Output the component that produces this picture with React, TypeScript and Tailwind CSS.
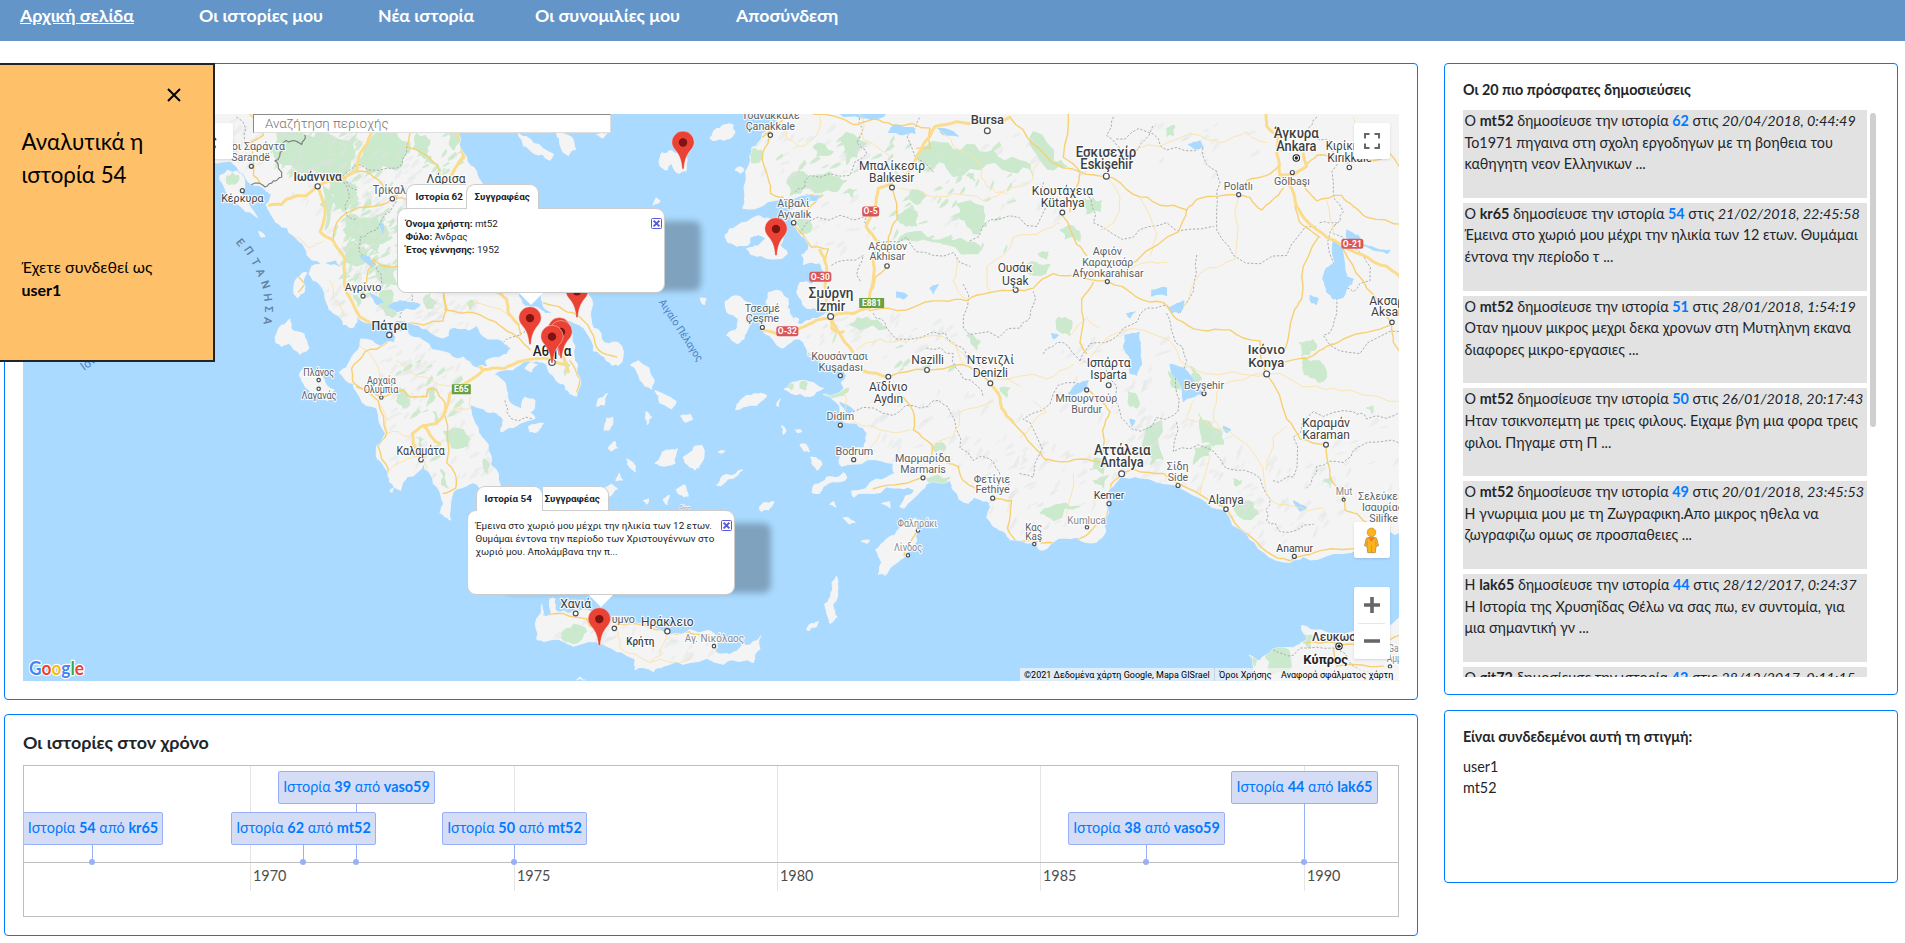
import React from "react";

type Pt = [number, number];

/* ---------- map data: survey sheets, each with its own origin ---------- */
const SX = 1 / 3;
const SY = 1 / 2.751;
const WEST = { x: 210, y: 110 };
const EAST = { x: 700, y: 110 };
const sheet = (o: { x: number; y: number }) => `translate(${o.x} ${o.y}) scale(${SX} ${SY})`;

const landWest = [
  "-20,0 745,0 742,60 770,130 800,170 818,205 840,300 880,420 930,500 925,508 932,520 945,540 985,545 1005,560 1045,570 1080,590 1095,650 1103,700 1112,750 1100,787 1080,780 1060,752 1035,738 1010,700 980,690 930,700 880,716 850,730 885,750 893,790 915,815 960,830 975,848 930,862 890,876 872,884 880,852 850,830 810,820 780,808 790,850 815,900 842,950 845,980 870,1030 878,1062 830,1050 790,1025 742,1042 722,1080 722,1128 705,1118 690,1108 700,1080 690,1050 660,1000 640,970 592,1008 572,1046 538,1022 530,990 503,960 500,925 527,890 500,820 450,790 430,752 388,722 420,690 450,650 453,630 510,650 555,640 550,610 590,605 640,635 700,665 760,680 800,710 835,705 828,690 870,680 905,655 880,636 820,622 800,592 750,602 722,600 715,620 650,602 600,585 560,578 540,592 480,585 442,566 432,596 400,590 372,560 350,530 330,480 297,450 305,430 350,424 395,432 380,412 340,425 305,412 285,380 250,345 205,312 182,285 168,260 185,232 165,218 125,205 100,175 62,140 -20,130",
  "1000,500 1130,500 1145,545 1150,600 1182,640 1235,650 1225,702 1190,690 1150,662 1130,612 1080,580 1030,560 1000,540",
  "980,1455 980,1400 995,1360 1003,1395 1025,1385 1020,1345 1035,1345 1040,1380 1080,1385 1120,1375 1160,1400 1250,1415 1290,1412 1350,1430 1400,1440 1440,1430 1495,1432 1512,1440 1515,1490 1560,1498 1600,1470 1640,1460 1652,1447 1650,1482 1630,1520 1600,1515 1540,1525 1440,1520 1360,1530 1330,1545 1275,1540 1275,1510 1220,1490 1180,1470 1090,1475 1060,1462 1000,1462",
  "1348,148 1355,118 1385,112 1398,120 1430,130 1428,168 1408,174 1385,145 1372,165",
  "925,65 970,92 1030,122 1020,138 970,118 940,98",
  "1040,65 1085,75 1097,108 1075,125 1050,95",
  "1160,68 1190,64 1180,76",
  "30,180 80,168 103,190 95,240 130,278 142,295 108,280 60,235 40,205",
  "146,335 165,348 156,350",
  "252,505 262,462 290,448 283,500 262,516",
  "198,640 215,592 240,575 242,600 282,616 297,655 270,672 235,640 215,650",
  "268,730 290,708 342,740 372,770 352,800 310,780 285,760",
  "1330,262 1338,242 1350,250",
  "1262,702 1285,690 1332,742 1325,768 1290,742",
  "1335,772 1398,802 1385,822 1350,806",
  "1160,815 1165,795 1192,780 1182,812",
  "1182,880 1190,848 1207,845 1198,880",
  "1195,930 1215,912 1222,930 1205,938",
  "1250,960 1268,970 1276,995 1262,985",
  "1308,830 1325,845 1312,865",
  "1412,842 1442,838 1448,850 1425,858",
  "1335,972 1370,935 1402,932 1395,972 1350,978",
  "1420,955 1475,922 1482,955 1455,990 1425,970",
  "1398,1045 1425,1032 1435,1062 1410,1058",
  "1360,1070 1378,1060 1372,1085",
  "1300,1075 1316,1070 1310,1084",
  "1180,1045 1205,1030 1222,1042 1200,1062",
  "1218,1020 1228,1000 1238,1018",
  "945,710 960,696 982,700 965,720",
  "930,830 945,790 975,800 962,830",
  "955,872 1000,862 985,882 960,885",
  "1475,520 1488,518 1484,535",
  "1100,1568 1110,1560 1125,1568",
  "540,1048 550,1040 546,1052",
];

const landEast = [
  "240,0 210,50 175,90 155,105 148,150 135,235 128,270 190,262 240,245 330,235 372,230 352,250 320,262 285,268 268,285 275,310 300,340 322,365 325,385 305,398 310,425 360,420 378,445 352,460 335,480 300,475 290,500 320,545 360,550 388,560 355,572 330,580 300,590 270,562 262,540 265,520 240,498 205,503 198,530 218,560 180,590 195,615 245,655 268,642 300,630 316,650 322,675 360,690 400,700 432,712 440,730 425,748 432,765 370,782 400,798 420,820 425,850 470,862 502,890 492,930 420,945 425,980 500,963 580,972 585,1000 530,1015 455,1048 462,1065 520,1055 600,1040 645,1045 600,1090 612,1095 665,1045 700,1022 750,1018 760,1045 805,1082 820,1065 860,1075 872,1090 860,1120 880,1145 915,1162 930,1182 1000,1190 1020,1210 1060,1188 1130,1175 1190,1188 1217,1160 1210,1130 1225,1080 1230,1040 1260,1010 1320,1012 1420,1030 1500,1067 1575,1100 1640,1165 1690,1215 1770,1244 1810,1228 1900,1220 2000,1195 2060,1160 2110,1165 2110,0",
  "75,345 110,320 170,292 212,300 250,340 240,372 262,395 225,410 170,402 140,382 175,374 198,350 175,342 150,350 150,365 110,375 85,365",
  "75,528 120,513 152,532 150,560 132,572 148,595 132,630 110,642 80,620 112,600 115,575 80,555",
  "30,78 60,50 100,42 105,62 80,80 45,84",
  "105,165 125,158 132,165 120,174",
  "253,768 290,748 340,750 370,765 330,788 300,780",
  "107,824 120,800 165,780 200,786 185,800 150,812",
  "336,1052 345,1030 380,1010 430,998 440,1012 400,1022 370,1035 350,1055",
  "535,1277 545,1245 527,1210 560,1180 600,1150 645,1122 662,1130 652,1160 635,1202 610,1232 580,1252 555,1280",
  "410,1283 414,1310 398,1360 411,1395 390,1412 374,1360 392,1340 396,1300",
  "320,1430 330,1415 355,1408 350,1420 328,1432",
  "300,922 318,920 328,940 312,938",
  "332,955 362,965 366,975 350,990 340,978",
  "245,868 258,882 250,892",
  "285,880 305,884 292,888",
  "50,1032 80,1003 128,990 112,1005 62,1034",
  "178,1095 195,1080 222,1078 205,1100 185,1104",
  "430,1122 445,1122 465,1135 450,1138",
  "484,1187 508,1184 500,1192",
  "390,1085 402,1078 408,1092",
  "545,1083 568,1078 570,1094",
  "55,940 75,938 66,944",
  "-20,930 5,925 8,960 -5,985 -20,960",
  "0,518 14,520 12,535",
  "230,812 242,795 236,815",
  "283,572 296,576 288,590",
  "1648,1500 1680,1515 1720,1482 1800,1470 1820,1458 1805,1418 1860,1430 1960,1435 2070,1420 2110,1385 2110,1600 1665,1600 1660,1530",
];

const greensWest = [
  "200,60 290,70 330,62 440,65 435,130 400,180 330,170 260,175 220,150 190,100",
  "490,70 560,65 600,90 590,120 540,160 470,170 450,140",
  "620,65 660,90 650,120 680,150 660,130 610,105",
  "360,190 420,200 440,230 400,280 370,250",
  "410,290 450,300 500,290 530,360 500,390 450,370 400,330",
  "340,210 360,300 345,330 330,260",
  "400,380 440,370 470,400 440,430 405,420",
  "500,430 550,440 560,480 520,480",
  "510,500 550,505 560,560 530,565",
  "430,510 450,520 445,540",
  "730,20 745,90 730,110 710,40",
  "190,10 240,60 210,70",
  "50,182 85,180 80,200 50,200",
  "640,520 660,505 680,530 650,545",
  "700,885 760,880 780,905 750,930 725,930",
  "570,765 600,800 590,820 560,800",
  "650,770 675,765 670,800 650,815",
  "620,900 640,905 630,930",
  "690,990 705,1000 715,1040 695,1030",
  "820,960 840,975 830,1000",
  "1055,1440 1090,1415 1130,1435 1110,1460 1065,1462",
  "770,530 790,525 780,550",
  "810,670 840,665 820,690",
  "1060,690 1080,700 1065,730",
  "670,830 685,850 675,860",
];
const greensEast = [
  "260,200 310,170 390,170 440,195 400,225 330,215 270,235",
  "420,80 500,90 470,130 440,150",
  "340,100 400,115 350,125",
  "655,130 720,90 800,95 880,110 960,140 1000,180 930,170 840,165 740,160 690,150",
  "770,260 850,265 860,320 820,340 780,300",
  "630,225 650,220 680,235 650,260",
  "590,290 650,280 650,320 620,320",
  "600,350 680,350 760,360 840,375 835,395 740,370 650,360 590,365",
  "430,230 470,220 460,240",
  "290,310 320,300 330,335 300,335",
  "450,590 500,570 540,585 560,600 480,605",
  "370,780 445,765 430,785 385,790",
  "800,620 840,635 830,660",
  "960,440 1010,420 1050,425 1010,455",
  "1015,395 1045,390 1040,410",
  "1000,60 1060,140 1100,155 1060,165 1010,120",
  "150,120 185,110 180,140 155,145",
  "1150,245 1205,250 1200,280 1160,285",
  "1080,330 1120,320 1140,360 1095,355",
  "1075,570 1115,580 1110,620 1080,610",
  "1285,775 1310,785 1310,820 1290,815",
  "1335,880 1385,855 1390,960 1350,975 1325,930",
  "1405,720 1440,740 1445,770 1415,760",
  "1470,705 1505,740 1495,755 1475,740",
  "1495,835 1560,880 1570,920 1540,925 1500,880",
  "1485,930 1530,920 1525,950 1480,975",
  "1180,960 1220,965 1210,1000 1170,990",
  "1180,1020 1225,1005 1210,1040",
  "1020,1110 1080,1085 1140,1090 1060,1130",
  "1605,1075 1660,1080 1675,1110 1630,1125 1600,1095",
  "1600,1015 1625,1020 1610,1035",
  "1798,640 1840,632 1845,660 1805,675",
  "1805,680 1840,690 1880,735 1830,735 1808,710",
  "1870,1020 1895,1010 1890,1040",
  "2000,820 2020,815 2015,835",
  "700,925 725,915 735,935 705,940",
  "680,1015 750,1010 740,1025 690,1030",
  "900,765 930,765 920,790",
  "258,762 280,755 275,770",
  "300,750 322,752 318,768 300,765",
  "1700,1490 1730,1475 1770,1500 1760,1555 1710,1550",
  "1650,1500 1670,1515 1665,1530",
  "1810,1440 1840,1450 1830,1480 1805,1460",
  "1400,50 1425,45 1420,70 1400,72",
  "800,180 820,175 825,195",
];

const watersWest = [
  "535,540 570,525 600,530 590,545 560,555",
  "450,400 480,405 492,430 470,420",
  "480,505 520,530 500,535",
  "510,310 520,315 518,340",
  "575,535 590,530 630,535 615,548",
];
const watersEast = [
  "565,62 585,40 640,48 645,65 610,68",
  "410,0 560,0 550,18 500,22 430,18",
  "715,50 760,60 775,72 730,68",
  "590,500 622,510 610,520 590,515",
  "690,490 715,480 700,505",
  "295,240 345,235 310,262",
  "420,805 460,825 440,835",
  "1355,495 1400,490 1400,510 1355,512",
  "1405,545 1452,525 1445,550 1415,558",
  "1275,620 1318,612 1320,650 1325,700 1310,730 1290,725 1290,680 1270,650",
  "1105,780 1130,755 1165,745 1160,760 1120,785",
  "1410,700 1450,710 1485,760 1510,780 1475,790 1450,802 1445,760 1420,730",
  "1900,360 1930,380 1930,400 1950,480 1930,515 1900,520 1880,500 1868,465 1880,435 1905,420",
  "1940,330 1975,345 1990,370 2040,385 2070,385 2060,395 2020,385 1960,372 1940,350",
  "1830,510 1855,520 1850,535 1835,530",
  "1780,1075 1820,1095 1800,1103",
  "1570,870 1592,880 1580,888",
  "1290,850 1305,855 1295,870",
  "1465,95 1500,85 1510,105 1480,105",
  "1945,460 1960,465 1955,480",
  "1280,560 1305,555 1290,572",
  "1055,615 1075,620 1060,630",
];

const motorWest = [
  "485,62 450,120 440,165 405,185 330,205 290,235 230,245 215,260 178,262",
  "325,215 345,290 330,335 370,360 405,410 408,500 450,570 490,588 560,590 600,605 650,635 740,655 790,700 820,714 880,712 940,690 1000,682 1060,700",
  "820,715 760,755 720,780 700,840 680,862 640,868 607,890 610,920 640,955",
  "640,868 665,900 690,920",
  "735,12 740,60 762,130 735,160 720,185",
  "860,500 890,520 895,560 925,590",
  "1060,680 1075,720",
];
const motorEast = [
  "930,20 850,38 770,32 705,45 670,95 645,140 620,180 580,195 535,215 525,270 498,320 535,365 520,420 515,490 508,545 460,560 415,560",
  "360,385 380,430 375,480 380,540 392,575 415,610 458,665",
  "165,605 230,615 300,600 350,578 392,570 415,560",
  "395,575 395,600 415,612 430,610",
  "490,718 565,735",
  "870,750 900,790 905,820 940,860",
  "1695,0 1700,45 1735,70 1730,120 1740,178 1775,215 1790,265 1825,310 1880,350 1925,370 1985,398 2060,430 2110,470",
  "1740,178 1780,178 1820,155 1810,120",
];
const roadsWest = [
  "545,620 530,640 465,665 425,710 430,750 505,800 530,890 503,925 515,960 535,990 530,1015",
  "703,835 710,970 735,1000 737,1040 700,1055",
  "440,762 515,790 580,770 600,790 650,788 655,768 680,770 690,790 705,805 708,832",
  "440,168 480,175 520,210 560,240 590,245",
  "700,500 705,550 800,560 850,580 880,600 930,630 960,660",
  "925,590 930,620",
  "1000,530 1060,550 1110,570 1150,620 1165,660 1220,680",
  "600,585 640,592 700,580 710,550 700,510",
  "120,12 160,70 120,90 130,180 150,200",
  "600,65 590,100 640,120 680,150 690,180",
  "370,360 380,310 440,270 490,265 545,245",
  "560,430 520,430 490,410 475,440 460,500",
  "555,600 540,620",
  "265,460 285,480 265,500",
  "1000,1388 1060,1385 1130,1400 1200,1405 1290,1415 1350,1430 1400,1442 1440,1436",
  "1130,1400 1140,1420 1160,1425",
  "1440,1440 1500,1445 1520,1490 1560,1488 1610,1465",
  "1080,690 1110,740 1100,775",
];
const roadsEast = [
  "155,100 200,65 260,12",
  "210,60 188,120 205,190 212,230 250,240",
  "300,242 365,235 345,255 300,280 280,310 335,378 385,382 375,420",
  "340,12 460,40 520,25 580,42 690,50 690,105 650,105",
  "577,215 592,300 565,350 565,380",
  "560,430 525,460 520,490",
  "508,552 620,550 730,525 800,525 870,502 945,495 1000,490 1060,450 1120,455 1220,470 1310,515 1390,530 1430,575 1500,605 1590,605 1680,635 1698,725 1760,850 1800,905 1878,920 1890,1010 1930,1065 1935,1100 1970,1110 2010,1145",
  "930,20 1000,95 1050,140 1090,160 1140,170 1220,182 1300,232 1380,262 1460,275 1492,245 1615,233 1650,240 1685,275 1715,250 1750,215",
  "1105,0 1090,130 1140,170 1110,280",
  "1087,290 1130,370 1160,400",
  "1460,275 1435,335 1310,415 1290,425",
  "1180,475 1145,520 1140,640 1160,670",
  "1160,770 1200,800 1230,830 1208,880 1210,940",
  "1040,960 1060,965 1150,960 1200,970",
  "940,860 1000,925 1040,965",
  "565,735 680,715 780,700 830,720 870,750",
  "610,790 640,830 640,880 695,920 695,950",
  "740,970 775,980 790,1020 825,1040",
  "520,1042 580,1032 665,1012",
  "880,1070 935,1075 922,1150 950,1190 1050,1190 1160,1170 1220,1120 1232,1030 1265,1000",
  "1265,1000 1300,988 1390,1000 1440,1030 1530,1075 1580,1100 1640,1165 1700,1215 1770,1240 1830,1222 1960,1207 2050,1175",
  "1755,660 1780,560 1805,520 1805,460 1855,350",
  "1755,693 1840,675 1880,650 1930,630 2075,590 2080,640 2110,690",
  "1785,265 1800,310 1860,350",
  "1640,195 1700,180 1735,155",
  "1810,210 1850,250 1925,235 1960,265 2000,295 2110,315",
  "1820,150 1850,125 1900,130 1940,145 2070,120 2110,190",
  "1925,380 1960,430 2000,490 2070,580",
  "650,1130 650,1160 625,1200 612,1225",
  "1820,1465 1900,1465 2000,1470 2110,1440",
  "1900,1480 1910,1530 2050,1530",
];
const lanesWest = [
  "505,810 530,850 530,890 600,900",
  "250,350 300,380 340,360",
  "540,990 590,960 640,960 680,1040",
  "560,690 600,720 660,740 720,760",
  "720,830 780,820 780,790",
  "1220,1420 1230,1480 1320,1520 1440,1510",
  "1370,1440 1350,1500 1320,1520",
  "770,535 800,530 890,560",
  "440,640 500,700 520,750",
  "360,470 370,520 400,560",
];
const lanesEast = [
  "220,12 260,80 300,100 350,70 360,20",
  "480,12 490,80 560,120 600,160 620,180",
  "600,215 700,240 760,230 850,250 900,230 1000,190 1010,150",
  "700,45 760,100 840,150 860,210 920,230",
  "770,410 760,470 800,520",
  "870,500 860,430 940,350 1030,330 1080,310",
  "1220,182 1260,240 1240,310 1200,330",
  "1320,240 1370,340 1350,400",
  "1615,240 1605,410 1500,450 1450,540",
  "1140,700 1260,610 1400,630 1440,690 1600,720 1700,725",
  "1700,725 1850,760 1950,770 2110,800",
  "1700,725 1560,760 1540,850 1640,920 1700,1060 1780,1090 1870,1095",
  "1760,870 1720,900 1700,990",
  "1480,800 1460,850 1560,880",
  "1530,950 1500,1060",
  "1280,440 1340,420 1400,420",
  "1880,250 1900,340",
  "750,640 800,690 960,760",
  "420,740 440,850 540,880 630,880",
  "540,890 510,930 500,960",
  "640,640 700,620 760,640 790,700",
  "470,660 540,630 620,640",
  "880,740 1040,740 1120,700",
  "1120,1000 1100,1120 1180,1140",
  "960,900 1040,830 1000,800",
  "1240,130 1380,100 1500,70 1560,90 1640,60 1700,90",
  "1110,620 1160,570 1200,600",
  "700,920 760,900 780,830 880,800",
  "1960,20 1990,80 2060,110",
];
const frontierWest = [
  "80,20 105,90 125,110",
  "560,220 540,280 500,330 450,350 460,400 500,440 510,500",
  "395,190 410,290 440,300",
  "440,220 400,180 450,150 560,160 590,100",
  "600,500 605,540 570,575",
  "885,800 890,830 970,850",
  "880,640 930,620 950,600",
];
const frontierEast = [
  "480,12 470,90 500,120 450,180 330,180 280,230",
  "700,170 620,70 660,20",
  "480,470 490,400 390,430",
  "300,340 420,290 500,290 520,350 620,350 700,400 810,430",
  "520,560 560,600 700,610 760,640 800,680",
  "460,830 580,840 660,820 700,800 750,830 780,930 870,960 900,1010 930,1030",
  "680,655 760,670 790,740 850,790",
  "790,480 790,600 830,615 960,600 990,570 1000,500",
  "960,1000 1000,1010 990,860 970,850 1060,780 1150,760",
  "810,360 900,300 1010,320 1030,200",
  "1250,80 1340,60 1400,110 1510,100 1520,150 1560,200 1550,300 1600,400 1760,400 1850,320",
  "1240,20 1220,70 1270,130 1360,40",
  "1160,230 1180,310 1300,350 1400,310 1540,320",
  "1490,400 1480,500 1440,560 1340,545 1270,600 1190,640 1140,690",
  "1400,560 1420,620 1460,690 1430,780 1420,840 1330,880 1300,880 1260,830 1250,760 1150,690",
  "1030,670 1090,640 1140,690",
  "1430,860 1420,940 1520,930 1560,960 1660,1000 1710,1070 1700,1130 1740,1160 1840,1140",
  "1720,1020 1780,1010 1780,900 1840,830 1960,830 2000,850 2110,820",
  "1820,1040 1850,980 1930,970 1970,930 2110,920",
  "1860,310 1910,310 1900,420 1910,560 1870,620 1980,670 2110,610",
  "1900,340 1990,400 2010,470 1960,500 1910,490",
  "1850,20 1820,60 1900,90 1900,200 1930,280 1900,320",
  "1720,1485 1780,1500 1800,1480 1900,1480 1960,1530 2060,1550",
];

const rimWest = ["125,205 165,212 190,195 215,185 205,160 195,140 220,110 215,95 245,85 275,95 285,70"];

type Relief = { c: Pt; r: Pt; n: number; tone: "hill" | "wood" };
const reliefWest: Relief[] = [
  { c: [430, 200], r: [210, 140], n: 80, tone: "hill" },
  { c: [330, 120], r: [150, 70], n: 50, tone: "wood" },
  { c: [470, 380], r: [90, 150], n: 55, tone: "hill" },
  { c: [470, 330], r: [100, 190], n: 90, tone: "wood" },
  { c: [660, 560], r: [180, 50], n: 35, tone: "hill" },
  { c: [620, 720], r: [150, 80], n: 40, tone: "hill" },
  { c: [640, 880], r: [120, 140], n: 30, tone: "hill" },
  { c: [650, 820], r: [130, 140], n: 16, tone: "wood" },
  { c: [780, 970], r: [70, 80], n: 14, tone: "hill" },
  { c: [150, 80], r: [110, 80], n: 26, tone: "hill" },
  { c: [680, 110], r: [80, 80], n: 22, tone: "wood" },
  { c: [340, 120], r: [120, 90], n: 30, tone: "hill" },
  { c: [1150, 1430], r: [130, 35], n: 22, tone: "hill" },
  { c: [1430, 1480], r: [130, 30], n: 14, tone: "hill" },
  { c: [370, 520], r: [50, 60], n: 12, tone: "hill" },
];
const reliefEast: Relief[] = [
  { c: [330, 130], r: [180, 90], n: 26, tone: "hill" },
  { c: [600, 160], r: [380, 110], n: 34, tone: "wood" },
  { c: [760, 300], r: [250, 110], n: 26, tone: "wood" },
  { c: [540, 620], r: [220, 60], n: 34, tone: "hill" },
  { c: [700, 880], r: [270, 110], n: 50, tone: "hill" },
  { c: [1020, 1040], r: [180, 130], n: 60, tone: "hill" },
  { c: [1400, 950], r: [220, 110], n: 55, tone: "hill" },
  { c: [1720, 1080], r: [240, 120], n: 60, tone: "hill" },
  { c: [1250, 740], r: [220, 140], n: 40, tone: "hill" },
  { c: [900, 200], r: [260, 150], n: 30, tone: "hill" },
  { c: [1500, 100], r: [320, 80], n: 20, tone: "hill" },
  { c: [430, 330], r: [120, 90], n: 16, tone: "hill" },
  { c: [1980, 980], r: [140, 130], n: 20, tone: "hill" },
  { c: [600, 660], r: [300, 60], n: 10, tone: "wood" },
];

function generator(seed: number) {
  let s = seed;
  return () => ((s = (s * 16807) % 2147483647) / 2147483647);
}

/* splits every long segment in two and pushes the middle sideways, twice */
function roughen(points: string, amount: number, closed: boolean): string {
  let pts = points.split(" ").map((p) => p.split(",").map(Number) as Pt);
  const rnd = generator(Math.abs(Math.round(pts[0][0] * 31 + pts[0][1] * 17)) + 101);
  for (let pass = 0; pass < 2; pass++) {
    const next: Pt[] = [];
    pts.forEach((a, i) => {
      next.push(a);
      if (!closed && i === pts.length - 1) return;
      const b = pts[(i + 1) % pts.length];
      const dx = b[0] - a[0];
      const dy = b[1] - a[1];
      const len = Math.hypot(dx, dy);
      if (len < 9 || len > 500) return;
      const k = (rnd() - 0.5) * 2 * amount;
      next.push([Math.round((a[0] + b[0]) / 2 - dy * k), Math.round((a[1] + b[1]) / 2 + dx * k)]);
    });
    pts = next;
  }
  return pts.map((p) => p.join(",")).join(" ");
}

function shards(list: Relief[], seed: number) {
  const rnd = generator(seed);
  const out: { d: string; tone: string }[] = [];
  for (const { c, r, n, tone } of list) {
    for (let i = 0; i < n; i++) {
      const a = rnd() * Math.PI * 2;
      const q = Math.sqrt(rnd());
      const x = c[0] + Math.cos(a) * r[0] * q;
      const y = c[1] + Math.sin(a) * r[1] * q;
      const len = 8 + rnd() * 20;
      const w = 4 + rnd() * 9;
      const pts = [
        [x - w, y + len * 0.6],
        [x - w * 0.3, y],
        [x + w * 1.2, y - len * 0.6],
        [x + w * 1.8, y - len * 0.2],
        [x + w * 0.6, y + len * 0.3],
      ];
      out.push({ d: pts.map((p) => p.map((v) => v.toFixed(0)).join(",")).join(" "), tone });
    }
  }
  return out;
}

/* [sheet, centre x, baseline y, drawn width, size, weight, colour, text] */
type Label = ["w" | "e", number, number, number, number, number, string, string];
const K = "#3c3f43";
const G = "#5b6066";
const L = "#868b91";
const labels: Label[] = [
  ["w", 145, 111, 160, 11.5, 400, G, "οι Σαράντα"],
  ["w", 122, 140, 116, 11, 400, G, "Sarandë"],
  ["w", 323, 195, 145, 13.5, 500, K, "Ιωάννινα"],
  ["w", 97, 254, 127, 12, 400, K, "Κέρκυρα"],
  ["w", 538, 230, 100, 12.5, 400, G, "Τρίκαλ"],
  ["w", 708, 201, 117, 13, 400, K, "Λάρισα"],
  ["w", 459, 498, 110, 12, 400, K, "Αγρίνιο"],
  ["w", 538, 604, 107, 14, 500, K, "Πάτρα"],
  ["w", 1026, 676, 116, 15.5, 500, "#202326", "Αθήνα"],
  ["w", 326, 731, 92, 10.5, 400, G, "Πλάνος"],
  ["w", 327, 795, 105, 10.5, 400, G, "Λαγανάς"],
  ["w", 514, 755, 86, 10.5, 400, G, "Αρχαία"],
  ["w", 513, 779, 104, 10.5, 400, G, "Ολυμπία"],
  ["w", 632, 949, 145, 12.5, 400, K, "Καλαμάτα"],
  ["w", 1097, 1369, 93, 13, 400, K, "Χανιά"],
  ["w", 1240, 1412, 70, 11.5, 400, G, "υμνο"],
  ["w", 1372, 1419, 158, 13.5, 400, K, "Ηράκλειο"],
  ["w", 1291, 1471, 84, 11.5, 500, K, "Κρήτη"],
  ["w", 1513, 1463, 178, 11.5, 400, L, "Αγ. Νικόλαος"],
  ["w", 1424, 1106, 30, 10, 400, L, "Θήρα"],
  ["e", 212, 25, 174, 12, 400, G, "Τσανάκκαλε"],
  ["e", 211, 55, 148, 12, 400, G, "Çanakkale"],
  ["e", 862, 39, 100, 13.5, 500, K, "Bursa"],
  ["e", 576, 165, 198, 13.5, 400, K, "Μπαλίκεσιρ"],
  ["e", 575, 199, 136, 13.5, 400, K, "Balıkesir"],
  ["e", 280, 267, 96, 11.5, 400, G, "Αϊβαλί"],
  ["e", 283, 296, 101, 11.5, 400, G, "Ayvalık"],
  ["e", 563, 385, 117, 11.5, 400, G, "Αξάριον"],
  ["e", 562, 414, 107, 11.5, 400, G, "Akhisar"],
  ["e", 393, 516, 135, 15, 500, K, "Σμύρνη"],
  ["e", 392, 552, 87, 15, 500, K, "İzmir"],
  ["e", 187, 555, 106, 11.5, 400, G, "Τσεσμέ"],
  ["e", 187, 584, 100, 11.5, 400, G, "Çeşme"],
  ["e", 419, 688, 170, 11.5, 400, G, "Κουσάντασι"],
  ["e", 422, 717, 133, 11.5, 400, G, "Kuşadası"],
  ["e", 683, 698, 98, 12.5, 400, K, "Nazilli"],
  ["e", 871, 700, 142, 13, 400, K, "Ντενιζλί"],
  ["e", 871, 734, 106, 13, 400, K, "Denizli"],
  ["e", 565, 772, 116, 13, 400, K, "Αϊδίνιο"],
  ["e", 565, 806, 88, 13, 400, K, "Aydın"],
  ["e", 421, 853, 83, 12, 400, G, "Didim"],
  ["e", 463, 948, 113, 12, 400, G, "Bodrum"],
  ["e", 668, 969, 166, 12, 400, G, "Μαρμαρίδα"],
  ["e", 669, 998, 137, 12, 400, G, "Marmaris"],
  ["e", 876, 1025, 110, 12, 400, G, "Φετίγιε"],
  ["e", 878, 1055, 103, 12, 400, G, "Fethiye"],
  ["e", 652, 1147, 119, 10.5, 400, L, "Φαληράκι"],
  ["e", 624, 1214, 84, 10.5, 400, L, "Λίνδος"],
  ["e", 1001, 1157, 50, 11.5, 400, G, "Κας"],
  ["e", 1001, 1184, 50, 11.5, 400, G, "Kaş"],
  ["e", 945, 447, 104, 12.5, 400, K, "Ουσάκ"],
  ["e", 946, 481, 80, 12.5, 400, K, "Uşak"],
  ["e", 1087, 234, 184, 12.5, 400, K, "Κιουτάχεια"],
  ["e", 1088, 266, 132, 12.5, 400, K, "Kütahya"],
  ["e", 1218, 128, 182, 14.5, 500, K, "Εσκισεχίρ"],
  ["e", 1220, 162, 158, 14.5, 500, K, "Eskişehir"],
  ["e", 1222, 400, 88, 11.5, 400, G, "Αφιόν"],
  ["e", 1223, 430, 153, 11.5, 400, G, "Καραχισάρ"],
  ["e", 1224, 459, 213, 11.5, 400, G, "Afyonkarahisar"],
  ["e", 1226, 708, 132, 12.5, 400, K, "Ισπάρτα"],
  ["e", 1226, 741, 110, 12.5, 400, K, "Isparta"],
  ["e", 1159, 804, 185, 12, 400, G, "Μπουρντούρ"],
  ["e", 1160, 833, 93, 12, 400, G, "Burdur"],
  ["e", 1267, 948, 170, 15, 500, K, "Αττάλεια"],
  ["e", 1266, 981, 130, 15, 500, K, "Antalya"],
  ["e", 1227, 1069, 92, 12, 400, K, "Kemer"],
  ["e", 1160, 1138, 116, 11.5, 400, L, "Kumluca"],
  ["e", 1433, 990, 65, 12, 400, G, "Σίδη"],
  ["e", 1434, 1020, 61, 12, 400, G, "Side"],
  ["e", 1578, 1083, 107, 13, 400, K, "Alanya"],
  ["e", 1512, 767, 120, 12, 400, G, "Beyşehir"],
  ["e", 1615, 220, 87, 11.5, 400, G, "Polatlı"],
  ["e", 1789, 76, 135, 14.5, 500, K, "Άγκυρα"],
  ["e", 1789, 112, 121, 14.5, 500, K, "Ankara"],
  ["e", 1776, 206, 108, 11.5, 400, G, "Gölbaşı"],
  ["e", 1955, 110, 156, 13, 400, K, "Κιρίκκαλε"],
  ["e", 1949, 143, 134, 13, 400, K, "Kırıkkale"],
  ["e", 1699, 672, 112, 14, 500, K, "Ικόνιο"],
  ["e", 1699, 706, 108, 14, 500, K, "Konya"],
  ["e", 2080, 536, 144, 12.5, 400, K, "Ακσαράυ"],
  ["e", 2078, 567, 130, 12.5, 400, K, "Aksaray"],
  ["e", 1878, 873, 144, 13, 400, K, "Καραμάν"],
  ["e", 1878, 905, 143, 13, 400, K, "Karaman"],
  ["e", 1932, 1059, 50, 12, 400, L, "Mut"],
  ["e", 2048, 1074, 146, 11.5, 400, G, "Σελεύκεια"],
  ["e", 2048, 1104, 124, 11.5, 400, G, "Ισαυρίας"],
  ["e", 2051, 1133, 86, 11.5, 400, G, "Silifke"],
  ["e", 1784, 1215, 110, 12, 400, K, "Anamur"],
  ["e", 1918, 1462, 164, 13.5, 500, K, "Λευκωσία"],
  ["e", 1877, 1524, 134, 12.5, 700, "#202326", "Κύπρος"],
  ["e", 2090, 1492, 50, 11, 400, L, "Gazi"],
  ["e", 2090, 1518, 60, 11, 400, L, "Αμμό"],
];

const towns: ["w" | "e", number, number, number][] = [
  ["w", 124, 155, 2], ["w", 323, 210, 2.6], ["w", 97, 222, 2], ["w", 547, 244, 2.2], ["w", 459, 512, 2], ["w", 538, 619, 2.6],
  ["w", 326, 743, 1.7], ["w", 326, 767, 1.7], ["w", 514, 791, 1.7], ["w", 633, 962, 2.2], ["w", 1097, 1385, 2.4],
  ["w", 1213, 1426, 2.2], ["w", 1372, 1434, 2.6], ["w", 1512, 1475, 1.7], ["w", 1026, 694, 3.2],
  ["e", 211, 69, 2.2], ["e", 862, 57, 2.9], ["e", 576, 213, 2.4], ["e", 281, 310, 2.2], ["e", 561, 429, 2.2], ["e", 392, 568, 2.9],
  ["e", 187, 598, 2], ["e", 421, 731, 2], ["e", 681, 715, 2.4], ["e", 871, 752, 2.4], ["e", 565, 734, 2.4], ["e", 421, 867, 2],
  ["e", 461, 962, 2], ["e", 669, 1012, 2], ["e", 878, 1068, 2], ["e", 654, 1157, 1.7], ["e", 624, 1225, 1.7], ["e", 1003, 1194, 1.7],
  ["e", 947, 495, 2.4], ["e", 1087, 282, 2.4], ["e", 1219, 182, 2.9], ["e", 1222, 472, 2], ["e", 1226, 757, 2.4], ["e", 1160, 770, 2],
  ["e", 1265, 1001, 2.9], ["e", 1227, 1083, 2], ["e", 1161, 1148, 1.7], ["e", 1434, 1033, 2], ["e", 1578, 1098, 2.2], ["e", 1512, 780, 2],
  ["e", 1616, 233, 2], ["e", 1777, 172, 2], ["e", 1948, 158, 2.2], ["e", 1700, 726, 2.9], ["e", 2076, 584, 2.2], ["e", 1878, 921, 2.4],
  ["e", 1931, 1072, 1.5], ["e", 1783, 1228, 2], ["e", 2070, 1531, 1.7],
];

const shields: ["w" | "e", number, number, string, boolean][] = [
  ["w", 754, 768, "E65", true],
  ["e", 515, 531, "E881", true],
  ["e", 512, 279, "O-5", false],
  ["e", 361, 459, "O-30", false],
  ["e", 262, 609, "O-32", false],
  ["e", 1957, 368, "O-21", false],
];

const pins: ["w" | "e", number, number][] = [
  ["w", 1419, 161], ["e", 228, 399], ["w", 1101, 570], ["w", 960, 644], ["w", 1048, 674], ["w", 1053, 682], ["w", 1026, 695], ["w", 1168, 1472],
];

const place = (s: "w" | "e", x: number, y: number): Pt => {
  const o = s === "w" ? WEST : EAST;
  return [o.x + x * SX, o.y + y * SY];
};

function Lines({ list, color, width, dash, wobble }: { list: string[]; color: string; width: number; dash?: string; wobble: number }) {
  return (
    <>
      {list.map((p, i) => (
        <polyline key={i} points={roughen(p, wobble, false)} fill="none" stroke={color} strokeWidth={width} strokeLinejoin="round" strokeLinecap="round" strokeDasharray={dash} vectorEffect="non-scaling-stroke" />
      ))}
    </>
  );
}

function Polys({ list, fill }: { list: string[]; fill: string }) {
  return (
    <>
      {list.map((p, i) => (
        <polygon key={i} points={p} fill={fill} stroke={fill} strokeWidth={3} strokeLinejoin="round" />
      ))}
    </>
  );
}

type Sheet = {
  o: { x: number; y: number };
  id: string;
  land: string[];
  greens: string[];
  waters: string[];
  motor: string[];
  roads: string[];
  lanes: string[];
  frontier: string[];
  relief: Relief[];
  seed: number;
};

function Terrain(p: Sheet) {
  const coast = p.land.map((l) => roughen(l, 0.17, true));
  return (
    <g transform={sheet(p.o)}>
      <clipPath id={p.id}>
        {coast.map((l, i) => (
          <polygon key={i} points={l} />
        ))}
      </clipPath>
      <Polys list={coast} fill="#f4f4f4" />
      <g clipPath={`url(#${p.id})`}>
        <Polys list={p.greens.map((g) => roughen(g, 0.28, true))} fill="#cbe9cc" />
        {shards(p.relief, p.seed).map((s, i) => (
          <polygon key={i} points={s.d} fill={s.tone === "wood" ? "#cbe9cc" : "#dfe2e2"} opacity={s.tone === "wood" ? 0.9 : 0.42} />
        ))}
        <Lines list={p.frontier} color="#a9adb1" width={1} dash="1.5 2.5" wobble={0.22} />
        <Polys list={p.waters.map((w) => roughen(w, 0.12, true))} fill="#aadaff" />
        <Lines list={p.lanes} color="#fbe3a8" width={0.9} wobble={0.14} />
        <Lines list={p.roads} color="#f8d070" width={1.4} wobble={0.09} />
        <Lines list={p.motor} color="#fbdc8c" width={3} wobble={0.07} />
      </g>
    </g>
  );
}

function Pin({ x, y }: { x: number; y: number }) {
  return (
    <g transform={`translate(${x} ${y})`}>
      <path d="M-.9 .4C-1.3-6-2.6-11.500-6-16.200C-8.600-19.600-11.200-22-11.200-26.200A11.200 11.200 0 0 1 11.200-26.200C11.200-22 8.600-19.600 6-16.200C2.600-11.500 1.300-6 .9 .4Z" fill="#ea4335" stroke="#fff" strokeWidth=".4" />
      <circle cx="0" cy="-26" r="4.2" fill="#7f1310" />
    </g>
  );
}

function MapCanvas() {
  return (
    <svg viewBox="23 114 1376 567" className="block h-full w-full" fontFamily="Roboto, 'Noto Sans', sans-serif">
      <rect x="23" y="114" width="1376" height="567" fill="#aadaff" />
      <Terrain o={WEST} id="land-west" land={landWest} greens={greensWest} waters={watersWest} motor={motorWest} roads={roadsWest} lanes={lanesWest} frontier={frontierWest} relief={reliefWest} seed={77} />
      <Terrain o={EAST} id="land-east" land={landEast} greens={greensEast} waters={watersEast} motor={motorEast} roads={roadsEast} lanes={lanesEast} frontier={frontierEast} relief={reliefEast} seed={4242} />
      <g transform={sheet(WEST)}>
        <Lines list={rimWest} color="#7d8084" width={1.2} wobble={0.2} />
      </g>

      {shields.map(([s, x, y, t, green], i) => {
        const [px, py] = place(s, x, y);
        const w = green ? t.length * 6 + 1 : t.length * 5 + 2;
        return (
          <g key={i}>
            <rect x={px - w / 2} y={py - 5} width={w} height="10" rx={green ? 0.5 : 2.5} fill={green ? "#6ba042" : "#d9565b"} />
            <text x={px} y={py + 3} fontSize="8.5" fontWeight="700" fill="#fff" textAnchor="middle">{t}</text>
          </g>
        );
      })}

      {towns.map(([s, x, y, r], i) => {
        const [px, py] = place(s, x, y);
        return <circle key={i} cx={px} cy={py} r={r} fill="#fff" stroke="#4b4f54" strokeWidth="1.2" />;
      })}
      {[place("e", 1789, 132), place("e", 1917, 1475)].map(([x, y], i) => (
        <g key={i}>
          <circle cx={x} cy={y} r="3.2" fill="#fff" stroke="#222" strokeWidth="1.1" />
          <circle cx={x} cy={y} r="1.7" fill="#222" />
        </g>
      ))}

      {labels.map(([s, x, y, w, size, weight, color, t], i) => {
        const [px, py] = place(s, x, y);
        return (
          <text key={i} x={px - (w * SX) / 2} y={py} textLength={w * SX} lengthAdjust="spacingAndGlyphs" fontSize={size * 0.96} fontWeight={weight} fill={color} stroke="#fff" strokeOpacity=".85" strokeWidth="2.4" strokeLinejoin="round" paintOrder="stroke">
            {t}
          </text>
        );
      })}

      <g fill="#5f7f9d" fontSize="11" fontWeight="500">
        {[
          ["Ε", 92, 364, 50], ["Π", 117, 386, 55], ["Τ", 138, 418, 60], ["Α", 153, 447, 66],
          ["Ν", 167, 480, 72], ["Η", 174, 515, 82], ["Σ", 176, 548, 90], ["Α", 174, 580, 98],
        ].map(([c, x, y, r], i) => {
          const [px, py] = place("w", x as number, y as number);
          return (
            <text key={i} transform={`translate(${px} ${py}) rotate(${r})`} textAnchor="middle" dy="4">{c}</text>
          );
        })}
      </g>
      <text transform="translate(658.5 302) rotate(57)" fontSize="10.5" textLength="72" lengthAdjust="spacingAndGlyphs" fill="#4d7fc4">Αιγαίο Πέλαγος</text>
      <text transform="translate(84 371) rotate(-36)" fontSize="12" fill="#4d7fc4">Ιόνιο Πέλαγος</text>

      {pins.map(([s, x, y], i) => {
        const [px, py] = place(s, x, y);
        return <Pin key={i} x={px} y={py} />;
      })}

      <text x="29" y="675" fontFamily="Lato, sans-serif" fontSize="19.5" fontWeight="700" textLength="55" lengthAdjust="spacingAndGlyphs" stroke="#fff" strokeWidth="2.4" paintOrder="stroke" strokeLinejoin="round">
        <tspan fill="#4285f4">G</tspan>
        <tspan fill="#ea4335">o</tspan>
        <tspan fill="#fbbc05">o</tspan>
        <tspan fill="#4285f4">g</tspan>
        <tspan fill="#34a853">l</tspan>
        <tspan fill="#ea4335">e</tspan>
      </text>
    </svg>
  );
}

function Bubble({ className, tabs, active, children }: { className: string; tabs: [string, string]; active: 0 | 1; children: React.ReactNode }) {
  return (
    <div className={`absolute w-[268px] font-[Roboto,sans-serif] text-[9.85px] text-[#212529] ${className}`}>
      <div className="absolute top-[37px] left-[36px] h-[70px] w-[268px] rounded-[8px] bg-black/25 blur-[3px]" />
      <div className="absolute top-[109px] left-[122px] z-10 size-0 border-x-[12px] border-t-[12px] border-x-transparent border-t-white" />
      <div className="relative ml-[9px] flex h-[25px] font-bold">
        <div className={active === 0 ? "relative z-10 flex w-[67px] items-center rounded-t-[9px] border border-b-0 border-[#ccc] bg-white pl-[8px] whitespace-nowrap" : "flex w-[60px] items-center rounded-tl-[9px] border border-r-0 border-[#ccc] bg-white pl-[9px] whitespace-nowrap"}>{tabs[0]}</div>
        <div className={active === 1 ? "relative z-10 flex w-[73px] items-center rounded-t-[9px] border border-b-0 border-[#ccc] bg-white pl-[8px] whitespace-nowrap" : "flex w-[66px] items-center rounded-tr-[9px] border border-l-0 border-[#ccc] bg-white pl-[2px] whitespace-nowrap"}>{tabs[1]}</div>
      </div>
      <div className="relative -mt-px flex h-[85px] rounded-[9px] border border-[#ccc] bg-white pt-[8px] pl-[8px] leading-[13px]">
        <div className="w-[245px] whitespace-nowrap">{children}</div>
        <svg viewBox="0 0 11 11" className="mt-[1px] size-[11px] shrink-0" fill="none" stroke="#5b5bd6">
          <rect x=".5" y=".5" width="10" height="10" rx="1" />
          <path d="M2.6 2.6l5.8 5.8M8.4 2.6l-5.8 5.8" strokeWidth="2" />
        </svg>
      </div>
      <div className={active === 1 ? "absolute top-[24px] left-[70px] z-10 h-[2px] w-[71px] bg-white" : "absolute top-[24px] left-[10px] z-10 h-[2px] w-[65px] bg-white"} />
    </div>
  );
}

const posts = [
  ["Ο", "mt52", "62", "20/04/2018, 0:44:49", "Το1971 πηγαινα στη σχολη εργοδηγων με τη βοηθεια του", "καθηγητη νεον Ελληνικων ..."],
  ["Ο", "kr65", "54", "21/02/2018, 22:45:58", "Έμεινα στο χωριό μου μέχρι την ηλικία των 12 ετων. Θυμάμαι", "έντονα την περίοδο τ ..."],
  ["Ο", "mt52", "51", "28/01/2018, 1:54:19", "Οταν ημουν μικρος μεχρι δεκα χρονων στη Μυτηληνη εκανα", "διαφορες μικρο-εργασιες ..."],
  ["Ο", "mt52", "50", "26/01/2018, 20:17:43", "Ηταν τσικνοπεμτη με τρεις φιλους. Ειχαμε βγη μια φορα τρεις", "φιλοι. Πηγαμε στη Π ..."],
  ["Ο", "mt52", "49", "20/01/2018, 23:45:53", "Η γνωριμια μου με τη Ζωγραφικη.Απο μικρος ηθελα να", "ζωγραφιζω ομως σε προσπαθειες ..."],
  ["Η", "lak65", "44", "28/12/2017, 0:24:37", "Η Ιστορία της Χρυσηΐδας Θέλω να σας πω, εν συντομία, για", "μια σημαντική γν ..."],
  ["Ο", "git72", "42", "28/12/2017, 0:11:15", "", ""],
];

const years = [
  { year: "1970", x: 226 },
  { year: "1975", x: 490 },
  { year: "1980", x: 753 },
  { year: "1985", x: 1016 },
  { year: "1990", x: 1280 },
];

const events = [
  { id: "54", user: "kr65", left: -1, width: 140, row: 1, dot: 68 },
  { id: "39", user: "vaso59", left: 254, width: 157, row: 0, dot: 332 },
  { id: "62", user: "mt52", left: 207, width: 145, row: 1, dot: 279 },
  { id: "50", user: "mt52", left: 418, width: 145, row: 1, dot: 490 },
  { id: "38", user: "vaso59", left: 1044, width: 157, row: 1, dot: 1122 },
  { id: "44", user: "lak65", left: 1207, width: 147, row: 0, dot: 1280 },
];

export default function App() {
  return (
    <div className="relative h-[943px] w-full overflow-hidden bg-white font-[Lato,'Noto_Sans',sans-serif] text-[14.33px] leading-[21.6px] text-[#212529]">
      <nav className="flex h-[41px] items-start bg-[#6495c8] pt-[4px] pl-[20px] text-[17.7px] leading-[24px] font-bold whitespace-nowrap text-white">
        <a className="w-[179px] underline">Αρχική σελίδα</a>
        <a className="w-[179px]">Οι ιστορίες μου</a>
        <a className="w-[157px]">Νέα ιστορία</a>
        <a className="w-[201px]">Οι συνομιλίες μου</a>
        <a>Αποσύνδεση</a>
      </nav>

      <div className="flex items-start gap-[26px] pt-[22px] pl-[4px]">
        <main className="flex w-[1414px] flex-col gap-[14px]">
          <section className="h-[637px] rounded-[4px] border border-[#007bff] px-[18px] pt-[50px]">
            <div className="relative h-[567px] w-[1376px] overflow-hidden">
              <MapCanvas />
              <div className="absolute top-[9px] left-[130px] flex h-[36px] w-[80px] items-center justify-end rounded-[2px] bg-white pr-[16px] font-[Roboto,sans-serif] text-[16px] shadow">Δορυφόρος</div>
              <div className="absolute top-0 left-[230px] flex h-[19px] w-[358px] items-center border border-t-[#8a8a8a] border-r-[#ddd] border-b-[#ddd] border-l-[#8a8a8a] bg-white pl-[11px] font-[Roboto,sans-serif] text-[13.3px] font-light text-[#757575]">
                Αναζήτηση περιοχής
              </div>

              <Bubble className="top-[70px] left-[373.5px]" tabs={["Ιστορία 62", "Συγγραφέας"]} active={1}>
                <p><b>Όνομα χρήστη:</b> mt52</p>
                <p><b>Φύλο:</b> Άνδρας</p>
                <p><b>Έτος γέννησης:</b> 1952</p>
              </Bubble>
              <Bubble className="top-[372px] left-[443.5px]" tabs={["Ιστορία 54", "Συγγραφέας"]} active={0}>
                <p>Έμεινα στο χωριό μου μέχρι την ηλικία των 12 ετων.</p>
                <p>Θυμάμαι έντονα την περίοδο των Χριστουγέννων στο</p>
                <p>χωριό μου. Απολάμβανα την π...</p>
              </Bubble>

              <div className="absolute top-[9px] right-[9px] flex size-[36px] items-center justify-center rounded-[2px] bg-white shadow">
                <svg viewBox="0 0 16 16" className="size-[16px]" fill="none" stroke="#666" strokeWidth="2">
                  <path d="M1 5.5V1h4.5M10.500 1H15v4.500M15 10.500V15h-4.500M5.500 15H1v-4.500" />
                </svg>
              </div>
              <div className="absolute top-[408px] right-[9px] flex size-[36px] items-center justify-center rounded-[2px] bg-white pr-[2px] shadow">
                <svg viewBox="0 0 16 28" className="h-[27px] w-[15px]">
                  <path d="M2.500 11.500Q8 8.500 13.500 11.500L15.500 19.500L12.800 20.500L12 27H4L3.200 20.500L.5 19.500Z" fill="#fbb41c" stroke="#9a7a52" strokeWidth=".7" />
                  <path d="M4.500 11L8 15.500L11.500 11Z" fill="#ee7b33" />
                  <path d="M8 19v8M3.500 14l-.2 6M12.500 14l.2 6" stroke="#c98a1c" strokeWidth=".7" />
                  <circle cx="8" cy="5.300" r="4.600" fill="#fbb41c" stroke="#c98a1c" strokeWidth=".7" />
                </svg>
              </div>
              <div className="absolute top-[473px] right-[9px] flex h-[72px] w-[36px] flex-col items-center rounded-[2px] bg-white shadow">
                <svg viewBox="0 0 36 72" className="h-[72px] w-[36px]">
                  <path d="M10 18h16M18 10v16M10 54h16" stroke="#666" strokeWidth="3.600" />
                  <path d="M4 36.500h27" stroke="#e6e6e6" />
                </svg>
              </div>

              <div className="absolute right-0 bottom-0 flex h-[13px] items-start bg-[#f5f5f5]/70 pl-[4px] font-[Roboto,sans-serif] text-[9px] leading-[15px] whitespace-nowrap text-black">
                <span className="w-[190px]">©2021 Δεδομένα χάρτη Google, Mapa GISrael</span>
                <span className="w-[67px] border-l border-[#c5d5e2] pl-[4px]">Όροι Χρήσης</span>
                <span className="w-[118px]">Αναφορά σφάλματος χάρτη</span>
              </div>
            </div>
          </section>

          <section className="h-[222px] rounded-[4px] border border-[#007bff] px-[18px] pt-[15px]">
            <h2 className="h-[35px] text-[17.9px] leading-[25px] font-bold">Οι ιστορίες στον χρόνο</h2>
            <div className="relative h-[152px] w-[1376px] overflow-hidden border border-[#bfbfbf]">
              {years.map((y) => (
                <div key={y.year} className="absolute top-0 h-[125px] border-l border-[#e5e5e5]" style={{ left: y.x }}>
                  <span className="absolute top-[98px] left-[2px] text-[14.400px] leading-[24px] text-[#4d4d4d]">{y.year}</span>
                </div>
              ))}
              {events.map((e) => (
                <div key={e.id} className={e.row === 0 ? "absolute top-[30px] h-[66px] w-px bg-[#97b0f8]" : "absolute top-[70px] h-[26px] w-px bg-[#97b0f8]"} style={{ left: e.dot }} />
              ))}
              <div className="absolute top-[96px] left-0 h-px w-full bg-[#bfbfbf]" />
              {events.map((e) => (
                <React.Fragment key={e.id}>
                  <div
                    className={e.row === 0 ? "absolute top-[5px] flex h-[33px] items-center justify-center rounded-[2px] border border-[#97b0f8] bg-[#d5ddf6] pb-[2px] text-[14.400px] whitespace-pre text-[#007bff]" : "absolute top-[46px] flex h-[33px] items-center justify-center rounded-[2px] border border-[#97b0f8] bg-[#d5ddf6] pb-[2px] text-[14.400px] whitespace-pre text-[#007bff]"}
                    style={{ left: e.left, width: e.width }}
                  >
                    Ιστορία <b>{e.id}</b> από <b>{e.user}</b>
                  </div>
                  <div className="absolute top-[93px] size-[6px] rounded-full bg-[#97b0f8]" style={{ left: e.dot - 3 }} />
                </React.Fragment>
              ))}
            </div>
          </section>
        </main>

        <aside className="flex w-[454px] flex-col gap-[15px]">
          <section className="h-[632px] rounded-[4px] border border-[#007bff] px-[18px] pt-[15px]">
            <h3 className="h-[31px] font-bold">Οι 20 πιο πρόσφατες δημοσιεύσεις</h3>
            <div className="relative h-[567px] overflow-hidden">
              <div className="flex w-[404px] flex-col gap-[5px]">
                {posts.map(([art, user, id, date, l1, l2]) => (
                  <article key={id} className="h-[87.800px] shrink-0 bg-[#e2e2e2] pl-[1.500px] whitespace-nowrap">
                    <p>{art} <b>{user}</b> δημοσίευσε την ιστορία <b className="text-[#007bff]">{id}</b> στις <i>{date}</i></p>
                    <p>{l1}</p>
                    <p>{l2}</p>
                  </article>
                ))}
              </div>
              <div className="absolute top-[3px] left-[407px] h-[314px] w-[6px] rounded-full bg-[#cfcfcf]" />
            </div>
          </section>

          <section className="h-[173px] rounded-[4px] border border-[#007bff] px-[18px] pt-[15px]">
            <h3 className="mb-[8px] font-bold">Είναι συνδεδεμένοι αυτή τη στιγμή:</h3>
            <p>user1</p>
            <p>mt52</p>
          </section>
        </aside>
      </div>

      <div className="absolute top-[63px] left-0 z-20 h-[299px] w-[215px] border-2 border-l-0 border-[#212529] bg-[#fec16a] pl-[21.5px] text-black">
        <svg viewBox="0 0 14 14" className="absolute top-[23px] left-[167px] size-[14px]" stroke="#000" strokeWidth="2">
          <path d="M1 1l12 12M13 1L1 13" />
        </svg>
        <p className="mt-[60px] text-[22.3px] leading-[33px]">Αναλυτικά η<br />ιστορία 54</p>
        <p className="mt-[64px] text-[16px] leading-[23.400px]">Έχετε συνδεθεί ως<br /><b>user1</b></p>
      </div>
    </div>
  );
}
